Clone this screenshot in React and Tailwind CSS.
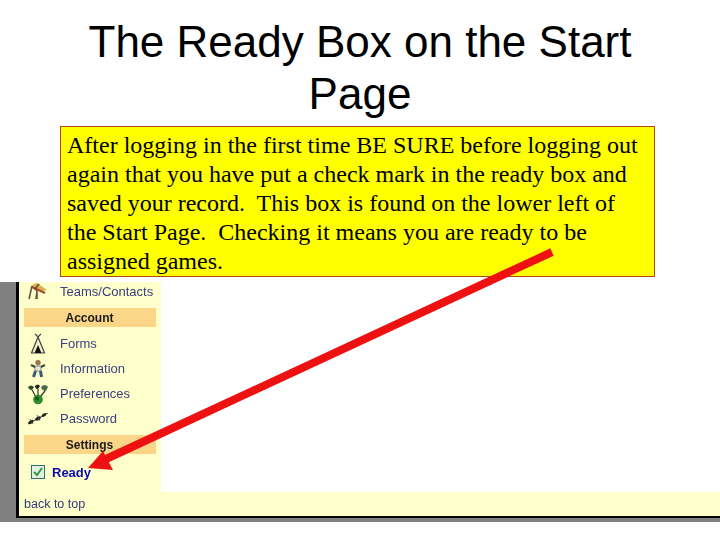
const sans = "font-['Liberation_Sans',Arial,sans-serif]";

function TeamsIcon() {
  return (
    <svg width="20" height="18" viewBox="0 0 20 18" className="shrink-0">
      <path d="M1 17 L4 4 M4 4 L9 9 L9 17 M9 9 L8 17" fill="none" stroke="#6a5240" strokeWidth="1.6" />
      <path d="M4 3 L14 9 L19 8 L9 1 Z" fill="#d8b24a" />
      <path d="M4 5 L17 11" stroke="#a8482a" strokeWidth="2" />
      <path d="M11 2 L7 7" stroke="#5a4a3a" strokeWidth="1.4" />
    </svg>
  );
}
function TipiIcon() {
  return (
    <svg width="16" height="22" viewBox="0 0 16 22" className="shrink-0">
      <path d="M5 1 L8 4 L11 1 M8 4 L1.5 20 L14.5 20 L8 4" fill="#f4f2c8" stroke="#444" strokeWidth="1.2" />
      <path d="M8 12 L4.5 20 L11.5 20 Z" fill="#111" />
    </svg>
  );
}
function PersonIcon() {
  return (
    <svg width="16" height="18" viewBox="0 0 16 18" className="shrink-0">
      <circle cx="8" cy="2.6" r="2.4" fill="#a8754a" stroke="#554" strokeWidth="0.5" />
      <path d="M1 5 L5 7 L11 7 L15 5" fill="none" stroke="#3d4a3a" strokeWidth="2" />
      <rect x="5" y="6" width="6" height="5" fill="#e8e8d0" stroke="#445" strokeWidth="0.6" />
      <path d="M5.5 11 L3.5 17 M10.5 11 L11.5 17" stroke="#3a5a7a" strokeWidth="3" />
    </svg>
  );
}
function PlantIcon() {
  return (
    <svg width="22" height="22" viewBox="0 0 22 22" className="shrink-0">
      <path d="M1 4 Q4 1 7 4 L5 7 Q2 7 1 4 Z" fill="#234a23" />
      <path d="M8 3 Q11 0 13 3 L11 6 Q8 6 8 3 Z" fill="#222" />
      <path d="M14 4 Q18 0 21 4 L19 8 Q15 8 14 4 Z" fill="#4a6a4a" />
      <path d="M5 7 L9 14 M11 6 L11 14 M18 8 L13 14" stroke="#333" strokeWidth="1.2" />
      <circle cx="11" cy="16.5" r="4.8" fill="#2f8a2f" />
      <circle cx="10" cy="15.5" r="2" fill="#145a14" />
    </svg>
  );
}
function AntIcon() {
  return (
    <svg width="22" height="13" viewBox="0 0 22 13" className="shrink-0">
      <path d="M1 12 L21 1" stroke="#444" strokeWidth="1" />
      <ellipse cx="4" cy="10" rx="3" ry="1.6" fill="#1d2a1d" transform="rotate(-30 4 10)" />
      <ellipse cx="11" cy="6.5" rx="3.2" ry="1.8" fill="#222" transform="rotate(-30 11 6.5)" />
      <ellipse cx="17" cy="3" rx="2.6" ry="1.5" fill="#1d2a1d" transform="rotate(-30 17 3)" />
      <path d="M3 7 L6 12 M10 3 L13 9" stroke="#444" strokeWidth="0.8" />
    </svg>
  );
}

function NavRow({ icon, label, className = "h-[25px]" }) {
  return (
    <div className={`flex items-center ${className}`}>
      <div className="w-[24px] ml-[2px] flex justify-center shrink-0">{icon}</div>
      <span className="text-[13px] leading-none text-[#3a4080] ml-[10px]">{label}</span>
    </div>
  );
}

function SectionBar({ label }) {
  return (
    <div className="h-[19px] bg-[#fbd689] flex items-center justify-center text-[12px] font-bold text-[#1a1a1a] pr-[1px]">
      {label}
    </div>
  );
}

export default function App() {
  return (
    <div className="relative w-[720px] h-[540px] bg-white overflow-hidden">
      <div className={`h-[282px] pt-[16px] text-center text-[44px] leading-[52px] text-black ${sans}`}>
        The Ready Box on the Start
        <br />
        Page
      </div>

      <div className="absolute left-[60px] top-[126px] w-[595px] h-[151px] bg-[#ffff00] border border-[#b04a14] pl-[6px] pt-[4px] font-['Liberation_Serif','Times_New_Roman',serif] text-[24px] leading-[29px] text-black whitespace-nowrap">
        After logging in the first time BE SURE before logging out
        <br />
        again that you have put a check mark in the ready box and
        <br />
        saved your record.&nbsp; This box is found on the lower left of
        <br />
        the Start Page.&nbsp; Checking it means you are ready to be
        <br />
        assigned games.
      </div>

      <div className={`flex h-[240px] w-[720px] bg-[#808080] pl-[16px] pb-[4px] ${sans}`}>
        <div className="flex-1 flex flex-col border-l-[3px] border-b-2 border-black bg-[#ffffcc] min-w-0">
          <div className="flex h-[210px]">
            <div className="w-[142px] px-[5px] blur-[0.3px]">
              <NavRow icon={<TeamsIcon />} label="Teams/Contacts" className="h-[18px]" />
              <div className="mt-[8px]">
                <SectionBar label="Account" />
              </div>
              <div className="mt-[4px]">
                <NavRow icon={<TipiIcon />} label="Forms" />
                <NavRow icon={<PersonIcon />} label="Information" />
                <NavRow icon={<PlantIcon />} label="Preferences" />
                <NavRow icon={<AntIcon />} label="Password" />
              </div>
              <div className="mt-[4px]">
                <SectionBar label="Settings" />
              </div>
              <div className="h-[36px] flex items-center pl-[7px] gap-[7px]">
                <div className="w-[14px] h-[14px] border border-[#2f6f6f] bg-[#e4efe4] flex items-center justify-center">
                  <svg width="12" height="12" viewBox="0 0 12 12">
                    <path d="M2 6 L5 9 L10 2" fill="none" stroke="#2f9a3f" strokeWidth="2" />
                  </svg>
                </div>
                <span className="text-[13px] font-bold text-[#0a0aa8] leading-none">Ready</span>
              </div>
            </div>
            <div className="flex-1 bg-white" />
          </div>
          <div className="flex-1 flex items-center pl-[5px] text-[12.5px] text-[#33387a] blur-[0.3px]">back to top</div>
        </div>
      </div>

      <svg className="absolute left-0 top-0 pointer-events-none" width="720" height="540" viewBox="0 0 720 540">
        <line x1="552" y1="252" x2="106" y2="459" stroke="#ee1111" strokeWidth="8" />
        <polygon points="88,468 103,451 113,470" fill="#ee1111" />
      </svg>
    </div>
  );
}
